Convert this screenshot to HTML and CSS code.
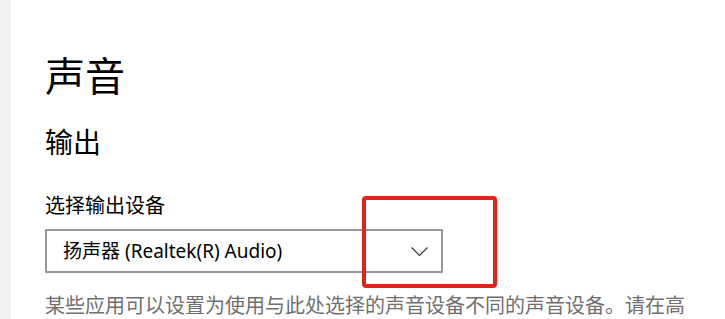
FILE: index.html
```html
<!DOCTYPE html>
<html lang="zh-CN">
<head>
<meta charset="utf-8">
<title>声音</title>
<link rel="stylesheet" href="styles.css">
</head>
<body>
<div class="page">
  <div class="rail"></div>
  <main class="main">
    <h1 class="title">声音</h1>
    <h2 class="section">输出</h2>
    <div class="label">选择输出设备</div>
    <div class="select">
      <span class="select-text">扬声器 (Realtek(R) Audio)</span>
      <svg class="chevron" width="17" height="9" viewBox="0 0 17 9" aria-hidden="true">
        <polyline points="0.5,0.5 8.5,8.5 16.5,0.5" fill="none" stroke="#333" stroke-width="1.1"/>
      </svg>
    </div>
    <p class="desc">某些应用可以设置为使用与此处选择的声音设备不同的声音设备。请在高级声音选项中自定义应用音量和设备。</p>
  </main>
  <div class="highlight"></div>
</div>
</body>
</html>
```

FILE: styles.css
```css
html, body {
  margin: 0;
  padding: 0;
  background: #fff;
}
body {
  font-family: "Noto Sans", "Noto Sans CJK SC", sans-serif;
  color: #000;
}
.page {
  position: relative;
  display: flex;
  height: 319px;
  overflow: hidden;
}
.rail {
  width: 11px;
  flex: none;
  background: #f2f2f2;
}
.main {
  flex: 1;
  padding: 54px 0 0 34px;
}
.title {
  margin: 0;
  font-size: 40px;
  font-weight: 400;
  line-height: 44px;
}
.section {
  margin: 28px 0 0;
  font-size: 28px;
  font-weight: 400;
  line-height: 32px;
}
.label {
  margin-top: 35px;
  font-size: 20px;
  line-height: 26px;
}
.select {
  margin-top: 10px;
  width: 398px;
  height: 44px;
  box-sizing: border-box;
  border: 2px solid #999;
  display: flex;
  align-items: center;
  justify-content: space-between;
  padding: 0 13px 0 16px;
}
.select-text {
  font-size: 19px;
  line-height: 24px;
}
.chevron {
  display: block;
}
.desc {
  margin: 19px 0 0;
  padding-right: 30px;
  font-size: 20px;
  line-height: 28px;
  color: #707070;
}
.highlight {
  position: absolute;
  left: 362px;
  top: 196px;
  width: 135px;
  height: 92px;
  box-sizing: border-box;
  border: 4.5px solid #e0231c;
  border-radius: 4px;
}
```
